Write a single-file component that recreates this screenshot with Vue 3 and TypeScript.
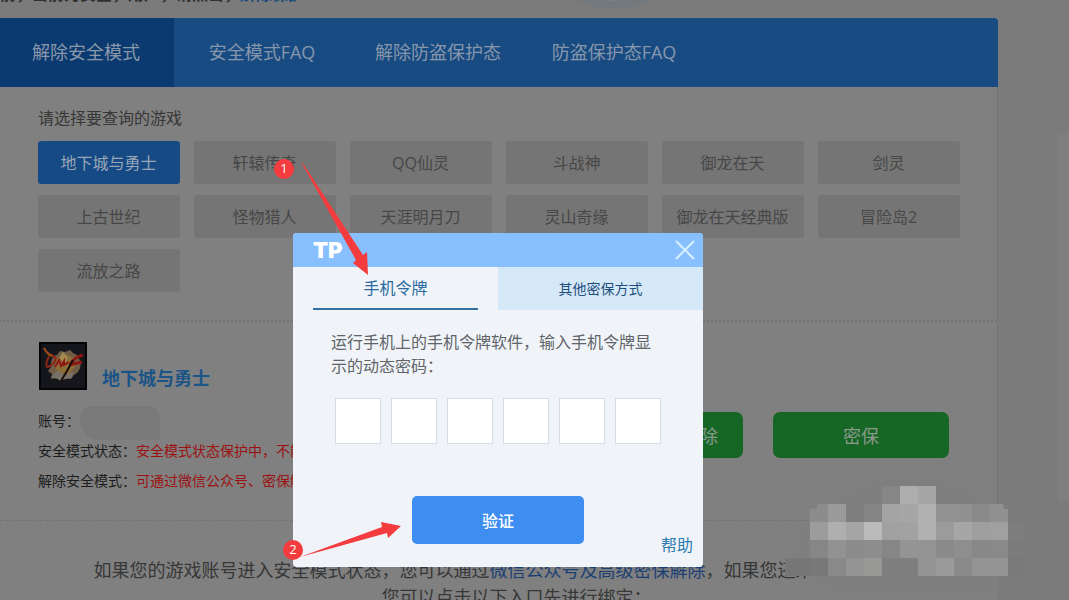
<script setup lang="ts">
import { ref } from 'vue'

const navItems: string[] = ['解除安全模式', '安全模式FAQ', '解除防盗保护态', '防盗保护态FAQ']
const games: string[] = [
  '地下城与勇士', '轩辕传奇', 'QQ仙灵', '斗战神', '御龙在天', '剑灵',
  '上古世纪', '怪物猎人', '天涯明月刀', '灵山奇缘', '御龙在天经典版', '冒险岛2',
  '流放之路',
]
const activeNav = ref(0)
const activeGame = ref(0)
const code = ref<string[]>(['', '', '', '', '', ''])

const cell = 18
const mosaic: string[][] = [
  ['', '', '', '', '#868686', '#adadad', '#a6a6a6', '', '', '', ''],
  ['#8c8c8c', '#9a9a9a', '#7e7e7e', '#858585', '#a4a4a4', '#a6a6a6', '#b0b0b0', '#929292', '#919191', '#8a8a8a', '#909090'],
  ['#9c9c9c', '#afafaf', '#a5a5a5', '#bababa', '#a1a1a1', '#a2a2a2', '#b1b1b1', '#9b9b9b', '#a6a6a6', '#9f9f9f', '#a0a0a0'],
  ['#868686', '#929292', '#8b8b8b', '#8d8d8d', '#868686', '#949494', '#949494', '#8a8a8a', '#8e8e8e', '#888888', '#898989'],
  ['#787878', '#898989', '#949494', '#989894', '#7f7f7f', '#7f7f7f', '#939393', '#9a9a9a', '#8a8a8a', '#949494', '#949494'],
]
</script>

<template>
  <div class="page">
    <div class="layout">
      <main class="main">
        <div class="intro">
          <p class="intro-text">前，当前为安全，用户，请点击，<a href="#">解除保护</a></p>
          <svg class="ring" viewBox="0 0 96 18" width="96" height="18" aria-hidden="true">
            <ellipse cx="48" cy="-15" rx="48" ry="24" fill="#74797d" />
            <ellipse cx="48" cy="-15" rx="22" ry="16" fill="#7d8082" />
          </svg>
        </div>

        <nav class="nav">
          <button
            v-for="(item, i) in navItems"
            :key="item"
            type="button"
            class="nav-item"
            :class="{ active: i === activeNav }"
            @click="activeNav = i"
          >{{ item }}</button>
        </nav>

        <div class="panel">
          <section class="chooser">
            <h2 class="chooser-title">请选择要查询的游戏</h2>
            <div class="games">
              <button
                v-for="(game, i) in games"
                :key="game"
                type="button"
                class="game"
                :class="{ active: i === activeGame }"
                @click="activeGame = i"
              >{{ game }}</button>
            </div>
          </section>

          <section class="account">
            <div class="account-info">
              <div class="account-head">
                <svg class="game-icon" viewBox="0 0 48 48" width="48" height="48" aria-hidden="true">
                  <rect width="48" height="48" fill="#040404" />
                  <rect x="2" y="2" width="44" height="44" fill="#15161b" />
                  <path d="M12 20 L14 14 L18 13 L21 9 L26 10 L31 8 L34 11 L38 13 L40 17 L42 21 L41 26 L39 30 L35 33 L32 37 L27 36 L21 39 L18 36 L12 37 L13 32 L9 29 L12 25Z" fill="#6f5e45" />
                  <path d="M17 17 L26 12 L34 16 L36 24 L30 32 L21 31 L16 26Z" fill="#8c6f38" />
                  <path d="M24 10 L29 15 L26 21 L20 16Z" fill="#a08a4e" />
                  <path d="M12 35 L18 29 L27 33 L35 29 L32 36 L22 38Z" fill="#77726a" />
                  <path d="M10 12 Q19 15 16 19 Q13 24 8 25 Q6 23 10 14" fill="none" stroke="#8a2413" stroke-width="2" />
                  <path d="M5 6 Q8 12 13 14" fill="none" stroke="#a04c18" stroke-width="2" />
                  <path d="M16 25 L20 18 L22 24 L25 19 L25 23 L30 20" fill="none" stroke="#8d1712" stroke-width="2" />
                  <path d="M44 13 Q35 15 31 23 M30 23 L43 20" fill="none" stroke="#8d1712" stroke-width="3" />
                  <path d="M34 18 L28 29 L22 39" fill="none" stroke="#1b0b0b" stroke-width="2" />
                </svg>
                <h3 class="account-name">地下城与勇士</h3>
              </div>
              <dl class="facts">
                <div class="fact"><dt>账号：</dt><dd><span class="smudge"></span></dd></div>
                <div class="fact"><dt>安全模式状态：</dt><dd>安全模式状态保护中，不能进行交易</dd></div>
                <div class="fact"><dt>解除安全模式：</dt><dd>可通过微信公众号、密保解除</dd></div>
              </dl>
            </div>
            <div class="actions">
              <button type="button" class="action wide-label">微信公众号解除</button>
              <button type="button" class="action">密保</button>
            </div>
          </section>

          <section class="notice">
            <p>如果您的游戏账号进入安全模式状态，您可以通过<a href="#">微信公众号及高级密保解除</a>，如果您还未绑定密保，</p>
            <p class="notice-next">您可以点击以下入口先进行绑定：</p>
          </section>
        </div>
      </main>
      <aside class="side"></aside>
    </div>

    <div class="overlay">
      <div class="dialog" role="dialog" aria-label="手机令牌">
        <header class="dialog-head">
          <span class="logo">TP</span>
          <button type="button" class="close" aria-label="关闭">
            <svg viewBox="0 0 20 20" width="20" height="20">
              <path d="M1 1 L19 19 M19 1 L1 19" stroke="#d8f0ff" stroke-width="2" fill="none" />
            </svg>
          </button>
        </header>
        <div class="tabs" role="tablist">
          <button type="button" role="tab" aria-selected="true" class="tab current"><span>手机令牌</span></button>
          <button type="button" role="tab" aria-selected="false" class="tab other">其他密保方式</button>
        </div>
        <form class="form" @submit.prevent>
          <p class="hint">运行手机上的手机令牌软件，输入手机令牌显示的动态密码：</p>
          <div class="digits">
            <input
              v-for="(_, i) in code"
              :key="i"
              v-model="code[i]"
              class="digit"
              type="text"
              maxlength="1"
              :aria-label="`动态密码第${i + 1}位`"
            />
          </div>
          <div class="form-foot">
            <button type="submit" class="verify">验证</button>
            <a href="#" class="help">帮助</a>
          </div>
        </form>
      </div>
    </div>

    <svg class="marks" viewBox="0 0 1069 600" width="1069" height="600" aria-hidden="true">
      <g fill="#7f7f7f">
        <ellipse cx="910" cy="512" rx="75" ry="34" />
        <ellipse cx="845" cy="550" rx="50" ry="42" />
        <rect x="830" y="504" width="168" height="92" />
      </g>
      <rect x="785" y="558" width="26" height="18" fill="#767676" />
      <rect x="1008" y="522" width="17" height="18" fill="#7d7d7d" />
      <rect x="1008" y="558" width="17" height="18" fill="#797979" />
      <g v-for="(row, r) in mosaic" :key="r">
        <template v-for="(fill, c) in row" :key="c">
          <rect v-if="fill" :x="810 + c * cell" :y="486 + r * cell" :width="cell" :height="cell" :fill="fill" />
        </template>
      </g>
      <path d="M810 504 H818 L817 508 L810 509Z" fill="#7f7f7f" />
      <path d="M1008 504 H1003 L1004 509 H1008Z" fill="#7c7c7c" />
      <g fill="#f43b3d">
        <path d="M301 162 L304 165 L363 255 L367 252 L368 275 L353 263 L356 260Z" />
        <path d="M300 557 L382 527 L381 522 L401 526 L388 538 L387 533Z" />
        <circle cx="284" cy="169" r="10" />
        <circle cx="293" cy="550" r="10" />
      </g>
      <g class="mark-number">
        <text x="284" y="173">1</text>
        <text x="293" y="554">2</text>
      </g>
    </svg>
  </div>
</template>

<style>
body {
  margin: 0;
  background: #7b7b7b;
}
</style>

<style scoped>
.page {
  position: relative;
  height: 100vh;
  overflow: hidden;
  background: #7b7b7b;
  font-family: "Open Sans", "Noto Sans CJK SC", sans-serif;
  color: #2b2b2b;
}
.page * {
  box-sizing: border-box;
}
button,
input {
  font: inherit;
  border: 0;
  padding: 0;
  margin: 0;
  cursor: pointer;
}
a {
  text-decoration: none;
}
p,
h2,
h3,
dl,
dd {
  margin: 0;
}
.layout {
  display: grid;
  grid-template-columns: minmax(0, 1fr) 11px;
  column-gap: 60px;
}
.intro {
  display: flex;
  justify-content: space-between;
  height: 18px;
  overflow: hidden;
  background: #7b7b7b;
}
.intro-text {
  margin-top: -18px;
  height: 24px;
  line-height: 24px;
  font-size: 16px;
  font-weight: 700;
  white-space: nowrap;
  color: #303030;
}
.intro-text a {
  color: #164a7e;
}
.ring {
  margin-right: 336px;
}
.nav {
  display: flex;
  height: 69px;
  overflow: hidden;
  border-radius: 0 4px 0 0;
  background: #184b82;
}
.nav-item {
  flex: none;
  width: 176px;
  padding-bottom: 3px;
  background: transparent;
  font-size: 18px;
  color: #8797ab;
}
.nav-item:first-child {
  margin-left: -2px;
}
.nav-item.active {
  background: #0a3a70;
  color: #8c98aa;
}
.panel {
  min-height: 513px;
  background: #808080;
  border-right: 1px solid #767676;
}
.chooser {
  padding: 19px 37px 28px 38px;
  border-bottom: 2px dotted #747474;
}
.chooser-title {
  height: 24px;
  margin-bottom: 11px;
  line-height: 24px;
  font-size: 16px;
  font-weight: 400;
  color: #373737;
}
.games {
  display: grid;
  grid-template-columns: repeat(6, minmax(0, 1fr));
  gap: 11px 14px;
}
.game {
  height: 43px;
  padding: 0 1px 1px 0;
  border-radius: 3px;
  background: #757575;
  font-size: 16px;
  color: #474747;
}
.game.active {
  background: #164a85;
  color: #98a6b5;
}
.account {
  display: flex;
  justify-content: space-between;
  height: 199px;
  padding: 20px 48px 0 38px;
  border-bottom: 1px dashed #737373;
}
.account-info {
  width: 480px;
}
.account-head {
  display: flex;
  align-items: flex-end;
  gap: 15px;
  padding-left: 1px;
  margin-bottom: 16px;
}
.account-name {
  height: 24px;
  line-height: 24px;
  font-size: 18px;
  color: #1b5487;
}
.fact {
  display: flex;
  height: 30px;
  line-height: 30px;
  font-size: 14px;
  white-space: nowrap;
  color: #1d1d1d;
}
.fact dd {
  color: #9c1111;
}
.smudge {
  display: block;
  width: 80px;
  height: 34px;
  border-radius: 12px 12px 2px 20px;
  background: #797979;
}
.actions {
  display: flex;
  gap: 30px;
  padding-top: 70px;
}
.action {
  width: 176px;
  height: 46px;
  padding-bottom: 1px;
  border-radius: 7px;
  background: #166625;
  font-size: 18px;
  color: #8a9a8c;
  white-space: nowrap;
}
.action.wide-label {
  margin-left: -200px;
}
.notice {
  padding-top: 36px;
  text-align: center;
  font-size: 18px;
  line-height: 27px;
  white-space: nowrap;
  color: #373737;
}
.notice a {
  color: #1b3f72;
}
.notice-next {
  padding-left: 36px;
}
.side {
  height: 367px;
  margin-top: 134px;
  background: #7f7f7f;
}
.overlay {
  position: absolute;
  inset: 0;
  display: flex;
  justify-content: center;
  align-items: flex-start;
  padding: 233px 73px 0 0;
}
.dialog {
  width: 410px;
  border-radius: 4px;
  overflow: hidden;
  background: #f0f4f8;
}
.dialog-head {
  display: flex;
  justify-content: space-between;
  align-items: center;
  height: 34px;
  padding: 0 8px 0 20px;
  background: #87bfff;
}
.logo {
  font-family: Inter, sans-serif;
  font-size: 22px;
  font-weight: 900;
  color: #ffffff;
}
.close {
  height: 20px;
  background: transparent;
}
.close svg {
  display: block;
}
.tabs {
  display: grid;
  grid-template-columns: 1fr 1fr;
  height: 43px;
}
.tab {
  background: transparent;
}
.tab.current {
  padding: 0 20px;
  font-size: 16px;
  color: #2a6a9e;
}
.tab.current span {
  display: block;
  height: 43px;
  line-height: 43px;
  border-bottom: 2px solid #32709f;
}
.tab.other {
  padding-bottom: 2px;
  background: #d5e8f8;
  font-size: 14px;
  color: #1f4f7c;
}
.form {
  padding: 20px 10px 10px 38px;
}
.hint {
  width: 326px;
  margin-bottom: 20px;
  font-size: 16px;
  line-height: 24px;
  color: #606468;
}
.digits {
  display: flex;
  gap: 10px;
  margin: 0 0 52px 4px;
}
.digit {
  width: 46px;
  height: 46px;
  border: 1px solid #d5dde5;
  background: #ffffff;
  font-size: 18px;
  text-align: center;
}
.form-foot {
  display: flex;
  justify-content: space-between;
  height: 61px;
  padding-left: 81px;
}
.verify {
  width: 172px;
  height: 48px;
  border-radius: 5px;
  background: #3e8df0;
  font-size: 16px;
  font-weight: 500;
  color: #ffffff;
}
.help {
  align-self: flex-end;
  line-height: 24px;
  font-size: 16px;
  color: #2b7ab0;
}
.marks {
  position: absolute;
  top: 0;
  left: 0;
  pointer-events: none;
}
.mark-number {
  font-size: 13px;
  text-anchor: middle;
  fill: #ffffff;
}
</style>
